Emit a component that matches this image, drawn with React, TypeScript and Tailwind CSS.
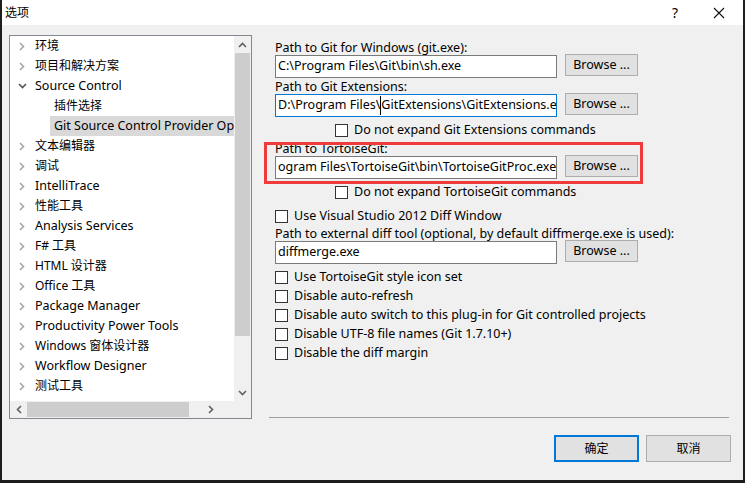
import React from "react";

const FONT = '"Noto Sans", "Noto Sans CJK SC", sans-serif';

type Row = { t: string; kind: "c" | "e" | "child" | "sel" };

const rows: Row[] = [
  { t: "环境", kind: "c" },
  { t: "项目和解决方案", kind: "c" },
  { t: "Source Control", kind: "e" },
  { t: "插件选择", kind: "child" },
  { t: "Git Source Control Provider Options", kind: "sel" },
  { t: "文本编辑器", kind: "c" },
  { t: "调试", kind: "c" },
  { t: "IntelliTrace", kind: "c" },
  { t: "性能工具", kind: "c" },
  { t: "Analysis Services", kind: "c" },
  { t: "F# 工具", kind: "c" },
  { t: "HTML 设计器", kind: "c" },
  { t: "Office 工具", kind: "c" },
  { t: "Package Manager", kind: "c" },
  { t: "Productivity Power Tools", kind: "c" },
  { t: "Windows 窗体设计器", kind: "c" },
  { t: "Workflow Designer", kind: "c" },
  { t: "测试工具", kind: "c" },
];

const hasCJK = (s: string) => /[\u4e00-\u9fff]/.test(s);

function ChevRight({ color = "#a6a6a6" }: { color?: string }) {
  return (
    <svg width="6" height="9" viewBox="0 0 6 9">
      <path d="M1 1 L4.5 4.5 L1 8" fill="none" stroke={color} strokeWidth="1.6" />
    </svg>
  );
}
function ChevDown({ color = "#555" }: { color?: string }) {
  return (
    <svg width="9" height="6" viewBox="0 0 9 6">
      <path d="M1 1 L4.5 4.5 L8 1" fill="none" stroke={color} strokeWidth="1.6" />
    </svg>
  );
}
function ChevUp({ color = "#606060" }: { color?: string }) {
  return (
    <svg width="9" height="6" viewBox="0 0 9 6">
      <path d="M1 5 L4.5 1.5 L8 5" fill="none" stroke={color} strokeWidth="1.6" />
    </svg>
  );
}
function ChevLeft({ color = "#606060" }: { color?: string }) {
  return (
    <svg width="6" height="9" viewBox="0 0 6 9">
      <path d="M5 1 L1.5 4.5 L5 8" fill="none" stroke={color} strokeWidth="1.6" />
    </svg>
  );
}

function TreeText({ t }: { t: string }) {
  return (
    <span className={`${hasCJK(t) ? "text-[12px]" : "text-[12.5px]"} text-black whitespace-nowrap leading-none`}>{t}</span>
  );
}

function Checkbox({ label, indent = false }: { label: string; indent?: boolean }) {
  return (
    <div className={`flex items-center h-[19px] ${indent ? "pl-[60px]" : ""}`}>
      <div className="w-[13px] h-[13px] border border-[#333333] bg-white shrink-0" />
      <span className="ml-[6px] text-[12.5px] text-black whitespace-nowrap leading-none">{label}</span>
    </div>
  );
}

function PathRow({ value, focused = false, caret = false }: { value: string; focused?: boolean; caret?: boolean }) {
  return (
    <div className="flex items-start h-[23px]">
      <div
        className={`w-[282px] h-[23px] bg-white border ${focused ? "border-[#0078d7]" : "border-[#7a7a7a]"} flex items-center pl-[2px] overflow-hidden`}
      >
        <span className="text-[12.5px] text-black whitespace-nowrap leading-none">
          {caret ? (
            <>
              D:\Program Files\
              <span className="inline-block w-0 h-[19px] border-l border-black align-middle -my-[4px]" />
              GitExtensions\GitExtensions.exe
            </>
          ) : (
            value
          )}
        </span>
      </div>
      <button className="ml-[8px] w-[73px] h-[22px] -mt-[1px] bg-[#e1e1e1] border border-[#adadad] text-[12.5px] text-black leading-none flex items-center justify-center">
        Browse ...
      </button>
    </div>
  );
}

function Label({ text }: { text: string }) {
  return (
    <div className="h-[15px] flex items-center pt-[2px] text-[12.5px] text-black whitespace-nowrap leading-none">{text}</div>
  );
}

export default function App() {
  return (
    <div className="w-[745px] h-[483px] bg-[#1e1e1e] overflow-hidden" style={{ fontFamily: FONT }}>
      <div className="ml-[2px] w-[741px] h-[480px] bg-[#f0f0f0] flex flex-col relative">
        {/* title bar */}
        <div className="h-[25px] bg-white flex items-center shrink-0">
          <span className="ml-[3px] text-[12px] text-black leading-none">选项</span>
          <div className="flex-1" />
          <span className="text-[14px] text-black leading-none mr-[35px]">?</span>
          <svg width="12" height="12" viewBox="0 0 12 12" className="mr-[18px]">
            <path d="M1 1 L11 11 M11 1 L1 11" stroke="#111" strokeWidth="1.1" />
          </svg>
        </div>

        {/* body */}
        <div className="flex pt-[10px] h-[394px] shrink-0">
          {/* tree */}
          <div className="ml-[7px] w-[243px] h-[384px] border border-[#828790] bg-white flex flex-col shrink-0">
            <div className="flex h-[365px]">
              <div className="w-[224px] overflow-hidden flex flex-col">
                {rows.map((r, i) => (
                  <div key={i} className="h-[20px] flex items-center shrink-0 relative">
                    {r.kind === "c" && (
                      <>
                        <div className="w-[25px] flex justify-center pl-[1px] pr-[2px]">
                          <ChevRight />
                        </div>
                        <TreeText t={r.t} />
                      </>
                    )}
                    {r.kind === "e" && (
                      <>
                        <div className="w-[25px] flex justify-center pr-[1px]">
                          <ChevDown />
                        </div>
                        <TreeText t={r.t} />
                      </>
                    )}
                    {r.kind === "child" && (
                      <span className="ml-[44px] text-[12px] text-black whitespace-nowrap leading-none">{r.t}</span>
                    )}
                    {r.kind === "sel" && (
                      <div className="ml-[40px] h-[20px] flex-1 bg-[#d9d9d9] flex items-center overflow-hidden">
                        <span className="ml-[4px] text-[12.5px] text-black whitespace-nowrap leading-none">{r.t}</span>
                      </div>
                    )}
                  </div>
                ))}
              </div>
              {/* vertical scrollbar */}
              <div className="w-[17px] bg-[#f0f0f0] flex flex-col items-center">
                <div className="h-[17px] flex items-center justify-center">
                  <ChevUp />
                </div>
                <div className="w-[15px] h-[283px] bg-[#cdcdcd]" />
                <div className="flex-1" />
                <div className="h-[17px] flex items-center justify-center">
                  <ChevDown color="#606060" />
                </div>
              </div>
            </div>
            {/* horizontal scrollbar */}
            <div className="flex h-[17px]">
              <div className="w-[224px] bg-[#f0f0f0] flex items-center">
                <div className="w-[17px] flex justify-center">
                  <ChevLeft />
                </div>
                <div className="w-[162px] h-[15px] bg-[#cdcdcd]" />
                <div className="flex-1 flex justify-center pr-[2px]">
                  <ChevRight color="#606060" />
                </div>
              </div>
              <div className="w-[17px] bg-[#f0f0f0]" />
            </div>
          </div>

          {/* right column */}
          <div className="ml-[17px] w-[460px] h-[384px] flex flex-col">
            <div className="pl-[6px] pt-[5px] flex flex-col">
              <Label text="Path to Git for Windows (git.exe):" />
              <PathRow value="C:\Program Files\Git\bin\sh.exe" />
              <div className="mt-[1px]">
                <Label text="Path to Git Extensions:" />
              </div>
              <PathRow value="" focused caret />
              <div className="mt-[4px]">
                <Checkbox indent label="Do not expand Git Extensions commands" />
              </div>
              <div className="mt-[1px]">
                <Label text="Path to TortoiseGit:" />
              </div>
              <PathRow value="ogram Files\TortoiseGit\bin\TortoiseGitProc.exe" />
              <div className="mt-[4px]">
                <Checkbox indent label="Do not expand TortoiseGit commands" />
              </div>
              <div className="mt-[5px]">
                <Checkbox label="Use Visual Studio 2012 Diff Window" />
              </div>
              <Label text="Path to external diff tool (optional, by default diffmerge.exe is used):" />
              <PathRow value="diffmerge.exe" />
              <div className="mt-[4px] flex flex-col">
                <Checkbox label="Use TortoiseGit style icon set" />
                <Checkbox label="Disable auto-refresh" />
                <Checkbox label="Disable auto switch to this plug-in for Git controlled projects" />
                <Checkbox label="Disable UTF-8 file names (Git 1.7.10+)" />
                <Checkbox label="Disable the diff margin" />
              </div>
            </div>
            <div className="flex-1" />
            <div className="h-[1px] bg-[#a0a0a0] mb-[1px]" />
          </div>
        </div>

        {/* buttons */}
        <div className="mt-[16px] flex justify-end pr-[12px] gap-[7px]">
          <button className="w-[85px] h-[27px] bg-[#e1e1e1] border-2 border-[#0078d7] text-[12px] text-black leading-none flex items-center justify-center">
            确定
          </button>
          <button className="w-[85px] h-[27px] bg-[#e1e1e1] border border-[#adadad] text-[12px] text-black leading-none flex items-center justify-center">
            取消
          </button>
        </div>

        {/* red annotation */}
        <div className="absolute left-[262px] top-[142px] w-[379px] h-[42px] border-[3px] border-[#ef3b3b] pointer-events-none" />
      </div>
    </div>
  );
}
